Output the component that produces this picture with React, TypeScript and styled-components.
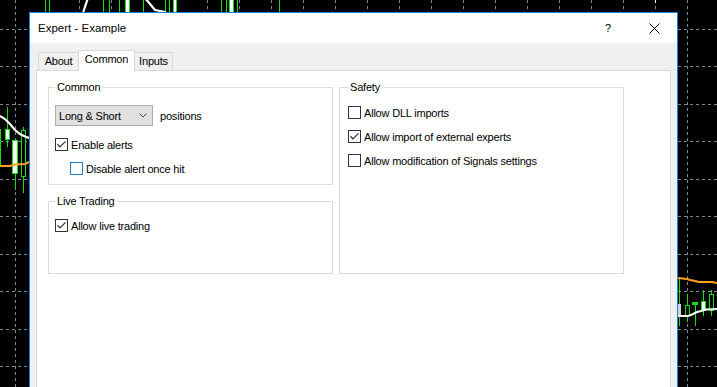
import React from "react";
import styled, { createGlobalStyle } from "styled-components";

const FONT = `"Liberation Sans", Arial, sans-serif`;

const GlobalStyle = createGlobalStyle`
  html, body { margin: 0; padding: 0; background: #000; }
  body { overflow: hidden; }
  * { box-sizing: border-box; }
`;

const Screen = styled.div`
  position: relative;
  width: 717px;
  height: 387px;
  overflow: hidden;
  background: #000;
  font-family: ${FONT};
  font-size: 11px;
  letter-spacing: -0.2px;
  color: #000;
`;

const ChartCanvas = styled.svg`
  position: absolute;
  inset: 0;
  display: block;
`;

const Window = styled.div`
  position: absolute;
  left: 29px;
  top: 12px;
  width: 649px;
  height: 420px;
  border: 1px solid #1883d7;
  background: #f0f0f0;
  display: flex;
  flex-direction: column;
`;

const TitleBar = styled.div`
  flex: none;
  height: 30px;
  background: #fff;
  display: flex;
  align-items: center;
  justify-content: space-between;
  padding-left: 8px;
`;

const Title = styled.span`
  font-size: 11.5px;
  letter-spacing: 0;
`;

const TitleButtons = styled.div`
  display: flex;
  height: 100%;
`;

const TitleButton = styled.div`
  width: 46px;
  height: 100%;
  display: flex;
  align-items: center;
  justify-content: center;
  font-size: 11px;
`;

const Body = styled.div`
  flex: 1;
  display: flex;
  flex-direction: column;
  padding-top: 7px;
`;

const TabStrip = styled.div`
  flex: none;
  height: 20px;
  display: flex;
  align-items: flex-end;
  padding-left: 8px;
`;

const Tab = styled.div<{ $active?: boolean; $w: number; $side?: "left" | "right" }>`
  position: relative;
  z-index: ${(p) => (p.$active ? 1 : 0)};
  width: ${(p) => p.$w}px;
  height: ${(p) => (p.$active ? 21 : 18)}px;
  margin-bottom: ${(p) => (p.$active ? -1 : 0)}px;
  background: ${(p) => (p.$active ? "#fff" : "#f0f0f0")};
  border: 1px solid #d9d9d9;
  border-bottom: none;
  ${(p) => (p.$side === "left" ? "border-right: none;" : "")}
  ${(p) => (p.$side === "right" ? "border-left: none;" : "")}
  text-align: center;
  line-height: 14px;
  padding-top: 1px;
`;

const TabPanel = styled.div`
  flex: 1;
  margin: 0 6px;
  background: #fff;
  border: 1px solid #d9d9d9;
  padding: 9px 11px 0;
`;

const Columns = styled.div`
  display: grid;
  grid-template-columns: 285px 285px;
  column-gap: 6px;
  align-items: stretch;
`;

const Column = styled.div`
  display: flex;
  flex-direction: column;
`;

const Group = styled.fieldset<{
  $padTop: number;
  $padLeft: number;
  $padBottom?: number;
  $minH?: number;
  $mt?: number;
}>`
  margin: ${(p) => p.$mt ?? 0}px 0 0;
  min-width: 0;
  border: 1px solid #dcdcdc;
  padding: ${(p) => p.$padTop}px 4px ${(p) => p.$padBottom ?? 0}px
    ${(p) => p.$padLeft}px;
  ${(p) => (p.$minH ? `min-height: ${p.$minH}px;` : "")}
`;

const Legend = styled.legend`
  padding: 0 2px;
  line-height: 14px;
  font-size: 11px;
`;

const ComboRow = styled.div`
  display: flex;
  align-items: center;
  gap: 7px;
  height: 21px;
`;

const Combo = styled.div`
  width: 98px;
  height: 21px;
  background: #e1e1e1;
  border: 1px solid #adadad;
  display: flex;
  align-items: center;
  justify-content: space-between;
  padding: 0 5px 0 3px;
  line-height: 14px;
`;

const Text = styled.span`
  line-height: 14px;
`;

const CheckRow = styled.div<{ $mt?: number; $indent?: number }>`
  display: flex;
  align-items: center;
  gap: 3px;
  height: 13px;
  margin-top: ${(p) => p.$mt ?? 0}px;
  margin-left: ${(p) => p.$indent ?? 0}px;
  line-height: 13px;
`;

const Box = styled.span<{ $focus?: boolean }>`
  flex: none;
  width: 13px;
  height: 13px;
  border: 1px solid ${(p) => (p.$focus ? "#1a7fd6" : "#333")};
  background: #fff;
  display: flex;
  align-items: center;
  justify-content: center;
`;

const Label = styled.span`
  padding-top: 1px;
`;

function Checkbox({ checked, focus, label, mt, indent }: { checked?: boolean; focus?: boolean; label: string; mt?: number; indent?: number }) {
  return (
    <CheckRow $mt={mt} $indent={indent}>
      <Box $focus={focus}>
        {checked && (
          <svg width="11" height="11" viewBox="0 0 11 11">
            <polyline points="1.5,5.3 4,7.9 9.5,2.4" fill="none" stroke="#333" strokeWidth="1.3" />
          </svg>
        )}
      </Box>
      <Label>{label}</Label>
    </CheckRow>
  );
}

type Candle = { x: number; w: number; top: number; bottom: number; hi: number; lo: number; fill: string; stroke?: string };

const GREEN = "#12e012";
const GRID = "#778899";

const candles: Candle[] = [
  // left strip
  { x: -2.5, w: 3, top: 129.5, bottom: 165.5, hi: 120, lo: 175, fill: "#000" },
  { x: 5.5, w: 4, top: 129.5, bottom: 139.5, hi: 107, lo: 147, fill: "#fff" },
  { x: 12.5, w: 5, top: 140.5, bottom: 173.5, hi: 140, lo: 190, fill: "#fff" },
  { x: 21.5, w: 4, top: 130.5, bottom: 176.5, hi: 127, lo: 193, fill: "#000" },
  // top strip
  { x: 45.5, w: 3.5, top: -10, bottom: 30, hi: -10, lo: 30, fill: "#000" },
  { x: 103.5, w: 5.5, top: -10, bottom: 30, hi: -10, lo: 30, fill: "#000" },
  { x: 125.5, w: 4, top: -10, bottom: 30, hi: -10, lo: 30, fill: "#fff" },
  { x: 165.5, w: 3.5, top: -10, bottom: 30, hi: -10, lo: 30, fill: "#000" },
  { x: 173.5, w: 3, top: -10, bottom: 30, hi: -10, lo: 30, fill: "#fff" },
  { x: 221.5, w: 4.5, top: -10, bottom: 30, hi: -10, lo: 30, fill: "#000" },
  { x: 229.5, w: 3.5, top: -10, bottom: 30, hi: -10, lo: 30, fill: "#fff" },
  // right strip
  { x: 677.5, w: 3, top: 304.5, bottom: 316.5, hi: 278, lo: 326, fill: "#d4d4d4", stroke: "#d4d4d4" },
  { x: 685.5, w: 4, top: 305.5, bottom: 315.5, hi: 294, lo: 322, fill: "#000" },
  { x: 692.5, w: 5, top: 302.5, bottom: 304.5, hi: 302, lo: 326, fill: GREEN },
  { x: 701.5, w: 4, top: 301.5, bottom: 310.5, hi: 290, lo: 316, fill: "#fff" },
  { x: 709.5, w: 4, top: 294.5, bottom: 310.5, hi: 290, lo: 316, fill: "#000" },
];

const wicks = [119.5, 143.5, 237.5, 279.5];

const whiteMA =
  "0,116 5,119 10,124 15,130 20,134 25,136.5 29,138 40,120 60,60 80,22 83.3,12 87.3,0 90,-8 120,-20 146.7,0 155,10 165,12 175,25 300,150 500,250 678,316 688,316 691,315 694,313.5 697,312 701,311 706,309.5 717,309";
const orangeMA =
  "0,166 10,166 15,164.5 25,164 29,162 200,200 500,260 678,278 687,279 690,280 695,281 699,282 712,282 717,283";

function Chart() {
  const hLines: number[] = [];
  for (let k = 0; k < 10; k++) hLines.push(Math.floor(29 + 37.5 * k) + 0.5);
  const vLines: number[] = [];
  for (let k = 0; k < 22; k++) vLines.push(15.5 + 32 * k);
  return (
    <ChartCanvas width="717" height="387" viewBox="0 0 717 387">
      <rect width="717" height="387" fill="#000" />
      <g stroke={GRID} strokeWidth="1" strokeDasharray="3 3" shapeRendering="crispEdges">
        {hLines.map((y) => (
          <line key={"h" + y} x1="0" y1={y} x2="717" y2={y} />
        ))}
        {vLines.map((x) => (
          <line key={"v" + x} x1={x} y1="0" x2={x} y2="387" />
        ))}
      </g>
      <g shapeRendering="crispEdges">
        {wicks.map((x) => (
          <line key={"w" + x} x1={x} y1="-5" x2={x} y2="30" stroke={GREEN} />
        ))}
        <line x1="655.5" y1="0" x2="655.5" y2="3" stroke="#fff" />
        {candles.map((c, i) => (
          <g key={i}>
            <line x1={c.x + c.w / 2} y1={c.hi} x2={c.x + c.w / 2} y2={c.lo} stroke={GREEN} />
            <rect x={c.x} y={c.top} width={c.w} height={c.bottom - c.top} fill={c.fill} stroke={c.stroke ?? GREEN} />
          </g>
        ))}
      </g>
      <polyline points={orangeMA} fill="none" stroke="#ffa21a" strokeWidth="2" />
      <polyline points={whiteMA} fill="none" stroke="#fff" strokeWidth="2.2" />
    </ChartCanvas>
  );
}

export default function App() {
  return (
    <>
      <GlobalStyle />
      <Screen>
        <Chart />
        <Window>
          <TitleBar>
            <Title>Expert - Example</Title>
            <TitleButtons>
              <TitleButton>?</TitleButton>
              <TitleButton>
                <svg width="11" height="11" viewBox="0 0 11 11">
                  <path d="M0.5 0.5 L10.5 10.5 M10.5 0.5 L0.5 10.5" stroke="#000" strokeWidth="1" />
                </svg>
              </TitleButton>
            </TitleButtons>
          </TitleBar>
          <Body>
            <TabStrip>
              <Tab $w={40} $side="left">About</Tab>
              <Tab $w={57} $active>Common</Tab>
              <Tab $w={38} $side="right">Inputs</Tab>
            </TabStrip>
            <TabPanel>
              <Columns>
                <Column>
                  <Group $padTop={11} $padLeft={6} $padBottom={9}>
                    <Legend>Common</Legend>
                    <ComboRow>
                      <Combo>
                        <span>Long &amp; Short</span>
                        <svg width="8" height="5" viewBox="0 0 8 5">
                          <polyline points="0.5,0.5 4,4 7.5,0.5" fill="none" stroke="#444" strokeWidth="1" />
                        </svg>
                      </Combo>
                      <Text>positions</Text>
                    </ComboRow>
                    <Checkbox checked label="Enable alerts" mt={12} />
                    <Checkbox focus label="Disable alert once hit" mt={11} indent={15} />
                  </Group>
                  <Group $padTop={11} $padLeft={6} $minH={80} $mt={9}>
                    <Legend>Live Trading</Legend>
                    <Checkbox checked label="Allow live trading" />
                  </Group>
                </Column>
                <Group $padTop={12} $padLeft={8}>
                  <Legend>Safety</Legend>
                  <Checkbox label="Allow DLL imports" />
                  <Checkbox checked label="Allow import of external experts" mt={11} />
                  <Checkbox label="Allow modification of Signals settings" mt={11} />
                </Group>
              </Columns>
            </TabPanel>
          </Body>
        </Window>
      </Screen>
    </>
  );
}
